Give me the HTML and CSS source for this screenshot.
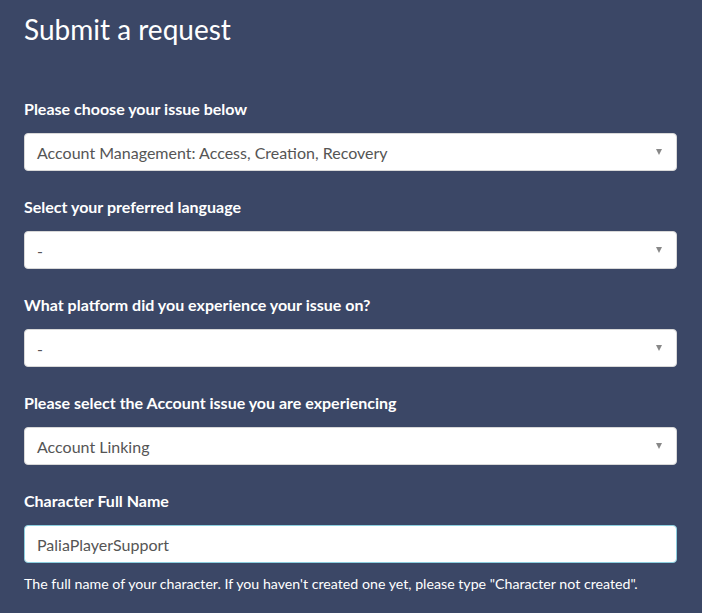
FILE: index.html
```html
<!DOCTYPE html>
<html lang="en">
<head>
<meta charset="utf-8">
<title>Submit a request</title>
<link rel="stylesheet" href="styles.css">
</head>
<body>
<main class="page">
  <h1 class="title">Submit a request</h1>
  <form class="form">
    <div class="field">
      <label class="label">Please choose your issue below</label>
      <div class="select"><span>Account Management: Access, Creation, Recovery</span><i class="arrow"></i></div>
    </div>
    <div class="field">
      <label class="label">Select your preferred language</label>
      <div class="select"><span>-</span><i class="arrow"></i></div>
    </div>
    <div class="field">
      <label class="label">What platform did you experience your issue on?</label>
      <div class="select"><span>-</span><i class="arrow"></i></div>
    </div>
    <div class="field">
      <label class="label">Please select the Account issue you are experiencing</label>
      <div class="select"><span>Account Linking</span><i class="arrow"></i></div>
    </div>
    <div class="field">
      <label class="label">Character Full Name</label>
      <div class="input">PaliaPlayerSupport</div>
      <p class="hint">The full name of your character. If you haven't created one yet, please type "Character not created".</p>
    </div>
  </form>
</main>
</body>
</html>
```
FILE: styles.css
```css
html, body {
  margin: 0;
  padding: 0;
  background: #3b4766;
}
body {
  font-family: Lato, "Open Sans", sans-serif;
  color: #fff;
}
.page {
  width: 653px;
  padding: 12px 24px 0 24px;
}
.title {
  margin: 0;
  font-size: 28px;
  line-height: 34px;
  font-weight: 400;
}
.form {
  margin-top: 53px;
  display: flex;
  flex-direction: column;
  gap: 26px;
}
.field {
  display: flex;
  flex-direction: column;
}
.label {
  font-size: 16px;
  line-height: 20px;
  font-weight: 700;
  margin-bottom: 14px;
}
.select, .input {
  box-sizing: border-box;
  height: 38px;
  background: #fff;
  border: 1px solid #d8d8d8;
  border-radius: 4px;
  display: flex;
  align-items: center;
  padding: 0 12px;
  font-size: 16px;
  color: #555;
}
.select span { flex: 1; }
.arrow {
  width: 0;
  height: 0;
  border-left: 3.5px solid transparent;
  border-right: 3.5px solid transparent;
  border-top: 6px solid #888;
  margin-right: 2px;
}
.input {
  border-color: #8ccfdf;
}
.hint {
  margin: 12px 0 0 0;
  font-size: 14.2px;
  line-height: 18px;
}
```
